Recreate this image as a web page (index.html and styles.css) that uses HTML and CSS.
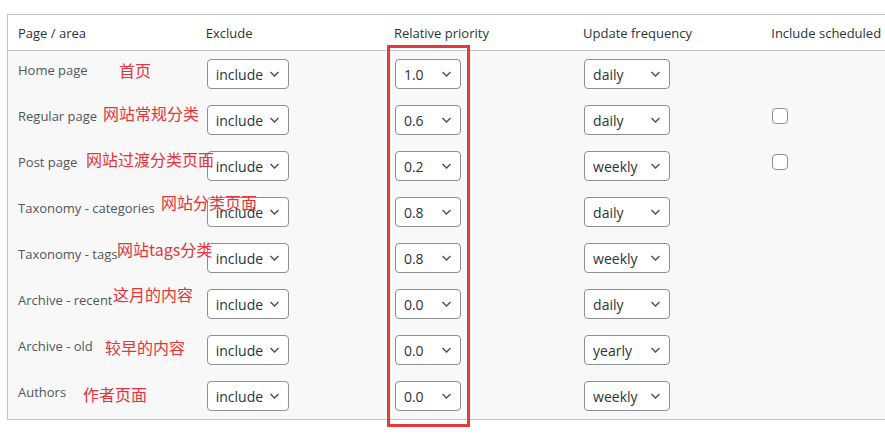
FILE: index.html
```html
<!DOCTYPE html>
<html lang="en">
<head>
  <meta charset="UTF-8">
  <meta name="viewport" content="width=device-width, initial-scale=1.0">
  <title>Sitemap settings</title>
  <link rel="stylesheet" href="styles.css">
</head>
<body>
  <div class="wrap">
    <table class="sitemap">
      <colgroup>
        <col class="c-area">
        <col class="c-ex">
        <col class="c-pr">
        <col class="c-fr">
        <col class="c-sc">
      </colgroup>
      <thead>
        <tr>
          <th>Page / area</th>
          <th>Exclude</th>
          <th>Relative priority</th>
          <th>Update frequency</th>
          <th>Include scheduled</th>
        </tr>
      </thead>
      <tbody>
        <tr>
          <td class="label">Home page<span class="note n1">首页</span></td>
          <td><span class="pick w-ex"><select><option>include</option></select><svg viewBox="0 0 10 6"><path d="M1 1l4 4 4-4"/></svg></span></td>
          <td><span class="pick w-pr"><select><option>1.0</option></select><svg viewBox="0 0 10 6"><path d="M1 1l4 4 4-4"/></svg></span></td>
          <td><span class="pick w-fr"><select><option>daily</option></select><svg viewBox="0 0 10 6"><path d="M1 1l4 4 4-4"/></svg></span></td>
          <td></td>
        </tr>
        <tr>
          <td class="label">Regular page<span class="note n2">网站常规分类</span></td>
          <td><span class="pick w-ex"><select><option>include</option></select><svg viewBox="0 0 10 6"><path d="M1 1l4 4 4-4"/></svg></span></td>
          <td><span class="pick w-pr"><select><option>0.6</option></select><svg viewBox="0 0 10 6"><path d="M1 1l4 4 4-4"/></svg></span></td>
          <td><span class="pick w-fr"><select><option>daily</option></select><svg viewBox="0 0 10 6"><path d="M1 1l4 4 4-4"/></svg></span></td>
          <td><input type="checkbox" class="check"></td>
        </tr>
        <tr>
          <td class="label">Post page<span class="note n3">网站过渡分类页面</span></td>
          <td><span class="pick w-ex"><select><option>include</option></select><svg viewBox="0 0 10 6"><path d="M1 1l4 4 4-4"/></svg></span></td>
          <td><span class="pick w-pr"><select><option>0.2</option></select><svg viewBox="0 0 10 6"><path d="M1 1l4 4 4-4"/></svg></span></td>
          <td><span class="pick w-fr"><select><option>weekly</option></select><svg viewBox="0 0 10 6"><path d="M1 1l4 4 4-4"/></svg></span></td>
          <td><input type="checkbox" class="check"></td>
        </tr>
        <tr>
          <td class="label">Taxonomy - categories<span class="note n4">网站分类页面</span></td>
          <td><span class="pick w-ex"><select><option>include</option></select><svg viewBox="0 0 10 6"><path d="M1 1l4 4 4-4"/></svg></span></td>
          <td><span class="pick w-pr"><select><option>0.8</option></select><svg viewBox="0 0 10 6"><path d="M1 1l4 4 4-4"/></svg></span></td>
          <td><span class="pick w-fr"><select><option>daily</option></select><svg viewBox="0 0 10 6"><path d="M1 1l4 4 4-4"/></svg></span></td>
          <td></td>
        </tr>
        <tr>
          <td class="label">Taxonomy - tags<span class="note n5">网站tags分类</span></td>
          <td><span class="pick w-ex"><select><option>include</option></select><svg viewBox="0 0 10 6"><path d="M1 1l4 4 4-4"/></svg></span></td>
          <td><span class="pick w-pr"><select><option>0.8</option></select><svg viewBox="0 0 10 6"><path d="M1 1l4 4 4-4"/></svg></span></td>
          <td><span class="pick w-fr"><select><option>weekly</option></select><svg viewBox="0 0 10 6"><path d="M1 1l4 4 4-4"/></svg></span></td>
          <td></td>
        </tr>
        <tr>
          <td class="label">Archive - recent<span class="note n6">这月的内容</span></td>
          <td><span class="pick w-ex"><select><option>include</option></select><svg viewBox="0 0 10 6"><path d="M1 1l4 4 4-4"/></svg></span></td>
          <td><span class="pick w-pr"><select><option>0.0</option></select><svg viewBox="0 0 10 6"><path d="M1 1l4 4 4-4"/></svg></span></td>
          <td><span class="pick w-fr"><select><option>daily</option></select><svg viewBox="0 0 10 6"><path d="M1 1l4 4 4-4"/></svg></span></td>
          <td></td>
        </tr>
        <tr>
          <td class="label">Archive - old<span class="note n7">较早的内容</span></td>
          <td><span class="pick w-ex"><select><option>include</option></select><svg viewBox="0 0 10 6"><path d="M1 1l4 4 4-4"/></svg></span></td>
          <td><span class="pick w-pr"><select><option>0.0</option></select><svg viewBox="0 0 10 6"><path d="M1 1l4 4 4-4"/></svg></span></td>
          <td><span class="pick w-fr"><select><option>yearly</option></select><svg viewBox="0 0 10 6"><path d="M1 1l4 4 4-4"/></svg></span></td>
          <td></td>
        </tr>
        <tr>
          <td class="label">Authors<span class="note n8">作者页面</span></td>
          <td><span class="pick w-ex"><select><option>include</option></select><svg viewBox="0 0 10 6"><path d="M1 1l4 4 4-4"/></svg></span></td>
          <td><span class="pick w-pr"><select><option>0.0</option></select><svg viewBox="0 0 10 6"><path d="M1 1l4 4 4-4"/></svg></span></td>
          <td><span class="pick w-fr"><select><option>weekly</option></select><svg viewBox="0 0 10 6"><path d="M1 1l4 4 4-4"/></svg></span></td>
          <td></td>
        </tr>
      </tbody>
    </table>
    <div class="highlight"></div>
  </div>
</body>
</html>
```

FILE: styles.css
```css
* {
  margin: 0;
  padding: 0;
  box-sizing: border-box;
}

html {
  overflow: hidden;
}

body {
  background: #fff;
  min-height: 100vh;
  font-family: "Open Sans", "Noto Sans", sans-serif;
  font-size: 13px;
  color: #1d2327;
}

.wrap {
  position: relative;
  padding: 14px 0 0 7px;
}

.sitemap {
  border: 1px solid #c3c4c7;
  border-collapse: collapse;
  table-layout: fixed;
  width: 943px;
}

.c-area,
.c-ex,
.c-fr,
.c-sc {
  width: 188px;
}

.c-pr {
  width: 189px;
}

.sitemap th,
.sitemap td {
  text-align: left;
  padding: 0 0 0 10px;
}

.sitemap thead th {
  font-weight: normal;
  height: 36px;
  line-height: 20px;
  background: #fff;
  border-bottom: 1px solid #c3c4c7;
  color: #2c3338;
  white-space: nowrap;
}

.sitemap tbody {
  background: #f8f8f8;
}

.sitemap tbody td {
  height: 46px;
  padding-top: 8px;
  padding-bottom: 8px;
  vertical-align: top;
}

.sitemap td.label {
  position: relative;
  padding-top: 10px;
  line-height: 18px;
  color: #50575e;
  white-space: nowrap;
}

.note {
  position: absolute;
  z-index: 2;
  font-family: "Noto Sans CJK SC", "Microsoft YaHei", sans-serif;
  font-size: 16px;
  line-height: 20px;
  color: #e8333a;
  white-space: nowrap;
}

.n1 { left: 111px; top: 9px; }
.n2 { left: 95px; top: 6px; }
.n3 { left: 78px; top: 6px; }
.n4 { left: 153px; top: 3px; }
.n5 { left: 109px; top: 4px; }
.n6 { left: 105px; top: 3px; }
.n7 { left: 97px; top: 10px; }
.n8 { left: 75px; top: 11px; }

.pick {
  position: relative;
  display: inline-block;
  margin-left: 1px;
  vertical-align: top;
}

.pick select {
  appearance: none;
  -webkit-appearance: none;
  display: block;
  width: 100%;
  height: 30px;
  padding: 0 24px 0 8px;
  font-family: "Open Sans", "Noto Sans", sans-serif;
  font-size: 14px;
  color: #2c3338;
  background: #fff;
  border: 1px solid #8c8f94;
  border-radius: 4px;
  outline: none;
}

.pick svg {
  position: absolute;
  right: 9px;
  top: 12px;
  width: 11px;
  height: 6px;
  pointer-events: none;
}

.pick svg path {
  fill: none;
  stroke: #50575e;
  stroke-width: 1.5;
}

.w-ex { width: 82px; }
.w-pr { width: 66px; }
.w-fr { width: 86px; }

.check {
  appearance: none;
  -webkit-appearance: none;
  display: block;
  width: 16px;
  height: 16px;
  margin: 3px 0 0 1px;
  background: #fff;
  border: 1px solid #8c8f94;
  border-radius: 4px;
}

.highlight {
  position: absolute;
  z-index: 3;
  left: 387px;
  top: 45px;
  width: 83px;
  height: 382px;
  border: 3px solid #e33b3b;
  pointer-events: none;
}
```
